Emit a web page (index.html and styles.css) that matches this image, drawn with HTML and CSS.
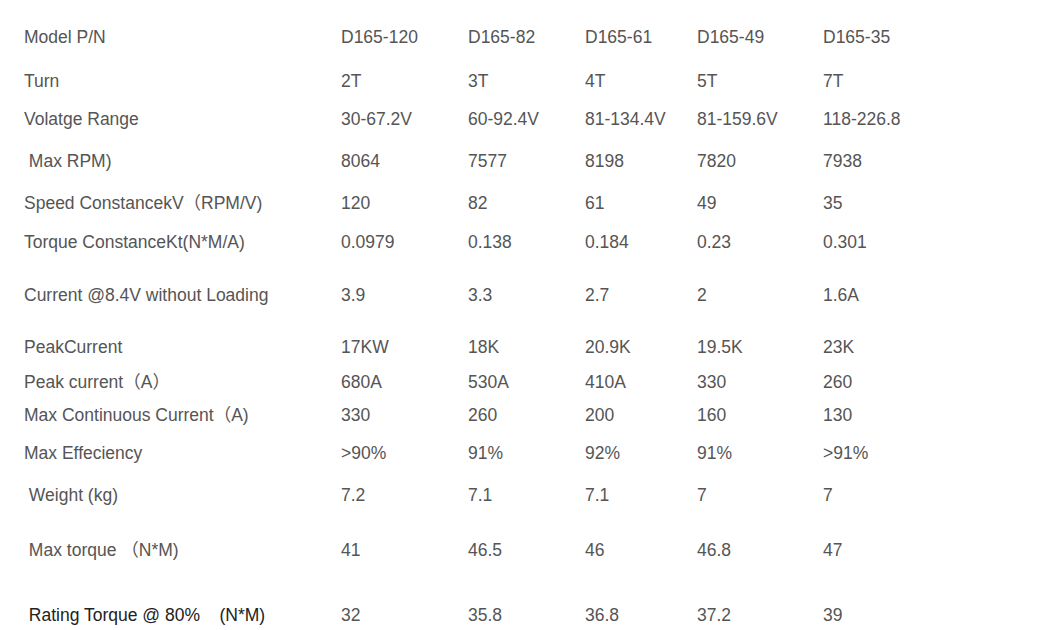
FILE: index.html
```html
<!DOCTYPE html>
<html>
<head>
<meta charset="utf-8">
<link rel="stylesheet" href="styles.css">
</head>
<body>
<div class="spec">
  <div class="row h46"><div class="lbl">Model P/N</div><div>D165-120</div><div>D165-82</div><div>D165-61</div><div>D165-49</div><div>D165-35</div></div>
  <div class="row h42"><div class="lbl">Turn</div><div>2T</div><div>3T</div><div>4T</div><div>5T</div><div>7T</div></div>
  <div class="row h34"><div class="lbl">Volatge Range</div><div>30-67.2V</div><div>60-92.4V</div><div>81-134.4V</div><div>81-159.6V</div><div>118-226.8</div></div>
  <div class="row h50"><div class="lbl">&nbsp;Max RPM)</div><div>8064</div><div>7577</div><div>8198</div><div>7820</div><div>7938</div></div>
  <div class="row h34"><div class="lbl">Speed ConstancekV（RPM/V)</div><div>120</div><div>82</div><div>61</div><div>49</div><div>35</div></div>
  <div class="row h44"><div class="lbl">Torque ConstanceKt(N*M/A)</div><div>0.0979</div><div>0.138</div><div>0.184</div><div>0.23</div><div>0.301</div></div>
  <div class="row h62"><div class="lbl">Current @8.4V without Loading</div><div>3.9</div><div>3.3</div><div>2.7</div><div>2</div><div>1.6A</div></div>
  <div class="row h42"><div class="lbl">PeakCurrent</div><div>17KW</div><div>18K</div><div>20.9K</div><div>19.5K</div><div>23K</div></div>
  <div class="row h28"><div class="lbl">Peak current（A）</div><div>680A</div><div>530A</div><div>410A</div><div>330</div><div>260</div></div>
  <div class="row h38"><div class="lbl">Max Continuous Current（A)</div><div>330</div><div>260</div><div>200</div><div>160</div><div>130</div></div>
  <div class="row h38"><div class="lbl">Max Effeciency</div><div>&gt;90%</div><div>91%</div><div>92%</div><div>91%</div><div>&gt;91%</div></div>
  <div class="row h46"><div class="lbl">&nbsp;Weight (kg)</div><div>7.2</div><div>7.1</div><div>7.1</div><div>7</div><div>7</div></div>
  <div class="row h64"><div class="lbl">&nbsp;Max torque （N*M)</div><div>41</div><div>46.5</div><div>46</div><div>46.8</div><div>47</div></div>
  <div class="row h66"><div class="lbl dark">&nbsp;Rating Torque @ 80%&nbsp;&nbsp;&nbsp; (N*M)</div><div>32</div><div>35.8</div><div>36.8</div><div>37.2</div><div>39</div></div>
</div>
</body>
</html>
```

FILE: styles.css
```css
html, body {
  margin: 0;
  padding: 0;
  background: #ffffff;
}
body {
  font-family: "Liberation Sans", Arial, "Noto Sans CJK SC", sans-serif;
  font-size: 17.5px;
  color: #555555;
}
.spec {
  padding: 14px 0 0 24px;
  display: flex;
  flex-direction: column;
}
.row {
  display: grid;
  grid-template-columns: 317px 127px 117px 112px 126px 1fr;
  align-items: center;
  white-space: nowrap;
  line-height: 20px;
}
.row > div {
  height: 20px;
  overflow: visible;
}
.dark {
  color: #222222;
}
.h28 { height: 28px; }
.h34 { height: 34px; }
.h38 { height: 38px; }
.h42 { height: 42px; }
.h44 { height: 44px; }
.h46 { height: 46px; }
.h50 { height: 50px; }
.h62 { height: 62px; }
.h64 { height: 64px; }
.h66 { height: 66px; }
```
